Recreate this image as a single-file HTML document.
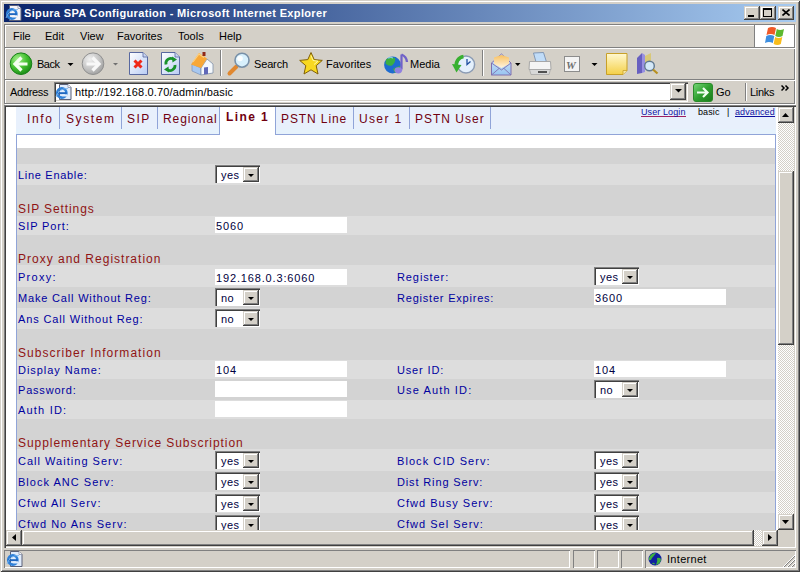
<!DOCTYPE html>
<html><head><meta charset="utf-8">
<style>
*{margin:0;padding:0;box-sizing:border-box}
html,body{width:800px;height:572px;overflow:hidden;background:#D4D0C8;font-family:"Liberation Sans",sans-serif;font-size:11px;color:#000}
.a{position:absolute}
.t{position:absolute;white-space:nowrap;line-height:1}
.raised{box-shadow: inset -1px -1px 0 #404040, inset 1px 1px 0 #D4D0C8, inset -2px -2px 0 #808080, inset 2px 2px 0 #FFFFFF;background:#D4D0C8}
.sunk1{box-shadow: inset 1px 1px 0 #808080, inset -1px -1px 0 #FFFFFF}

.tab{font-size:12px;color:#700010;letter-spacing:1px}
.tabact{font-size:12px;color:#700010;font-weight:bold;letter-spacing:1.4px}
.lnk{font-size:9px;letter-spacing:0.1px;line-height:8px;padding-bottom:0px}
.lbl{font-size:11px;color:#0000A0;letter-spacing:0.7px}
.hdr{font-size:12px;color:#901414;letter-spacing:0.9px}
.inp{width:132px;height:16px;background:#fff}
.inp span{position:absolute;left:1px;top:4px;font-size:11px;line-height:11px;color:#000040;letter-spacing:0.85px;white-space:nowrap}
.sel{width:45px;height:18px;background:#fff;box-shadow: inset 1px 1px 0 #808080, inset 2px 2px 0 #404040, inset -1px -1px 0 #FFFFFF}
.sel span{position:absolute;left:6px;top:5px;font-size:11px;line-height:11px;color:#000040;letter-spacing:0.4px;white-space:nowrap}
.sel i{position:absolute;left:28px;top:2px;width:16px;height:15px;background:#D4D0C8;box-shadow: inset -1px -1px 0 #404040, inset 1px 1px 0 #D4D0C8, inset -2px -2px 0 #808080, inset 2px 2px 0 #FFFFFF}
.sel i:after{content:"";position:absolute;left:5px;top:7px;border-left:3px solid transparent;border-right:3px solid transparent;border-top:3px solid #000}
</style></head><body>
<!-- window frame -->
<div class="a" style="left:0;top:0;width:800px;height:572px;background:#D4D0C8;box-shadow: inset 1px 1px 0 #D4D0C8, inset -1px -1px 0 #404040, inset 2px 2px 0 #FFFFFF, inset -2px -2px 0 #808080;"></div>

<!-- title bar -->
<div class="a" style="left:4px;top:4px;width:792px;height:18px;background:linear-gradient(to right,#0A246A,#A6CAF0)"></div>
<svg class="a" style="left:5px;top:5px" width="17" height="17" viewBox="0 0 17 17">
 <path d="M4.5 0.5H13L16 3.5V15.5H4.5z" fill="#F4F4F8" stroke="#5A6078" stroke-width="1"/>
 <path d="M13 0.5V3.5H16" fill="#fff" stroke="#8890A8" stroke-width="0.8"/>
 <circle cx="6.8" cy="9" r="4.6" fill="none" stroke="#2F80D8" stroke-width="2.6"/>
 <rect x="2.2" y="8.2" width="9.5" height="1.9" fill="#1F66C0"/>
 <rect x="7.2" y="10.3" width="5" height="2.2" fill="#F4F4F8"/>
 <path d="M1 13Q4 4 13 4.5" stroke="#7AB8F0" stroke-width="0.9" fill="none"/>
</svg>
<div class="t" style="left:24px;top:8px;color:#fff;font-weight:bold;font-size:11px;letter-spacing:0.35px">Sipura SPA Configuration - Microsoft Internet Explorer</div>
<div class="a raised" style="left:744px;top:6px;width:16px;height:14px"><div class="a" style="left:4px;top:9px;width:6px;height:2px;background:#000"></div></div>
<div class="a raised" style="left:760px;top:6px;width:16px;height:14px"><div class="a" style="left:3px;top:2px;width:9px;height:9px;border:1px solid #000;border-top-width:2px"></div></div>
<div class="a raised" style="left:778px;top:6px;width:16px;height:14px">
 <svg class="a" style="left:4px;top:3px" width="8" height="7" viewBox="0 0 8 7"><path d="M0.5 0.5L7.5 6.5M7.5 0.5L0.5 6.5" stroke="#000" stroke-width="1.6"/></svg>
</div>

<!-- menu bar -->
<div class="a" style="left:4px;top:24px;width:791px;height:80px;border:1px solid #808080;border-right:0;border-bottom:0"></div>
<div class="a" style="left:5px;top:25px;width:791px;height:80px;border-left:1px solid #fff;border-top:1px solid #fff;border-right:1px solid #fff;border-bottom:1px solid #fff"></div>
<div class="a" style="left:794px;top:24px;width:1px;height:80px;background:#808080"></div>
<div class="a" style="left:4px;top:103px;width:791px;height:1px;background:#808080"></div>
<div class="a" style="left:4px;top:47px;width:791px;height:1px;background:#808080"></div>
<div class="a" style="left:5px;top:48px;width:790px;height:1px;background:#fff"></div>
<div class="a" style="left:4px;top:79px;width:791px;height:1px;background:#808080"></div>
<div class="a" style="left:5px;top:80px;width:790px;height:1px;background:#fff"></div>
<div class="t" style="left:13px;top:31px">File</div>
<div class="t" style="left:45px;top:31px">Edit</div>
<div class="t" style="left:80px;top:31px">View</div>
<div class="t" style="left:117px;top:31px">Favorites</div>
<div class="t" style="left:178px;top:31px">Tools</div>
<div class="t" style="left:219px;top:31px">Help</div>
<div class="a" style="left:754px;top:25px;width:1px;height:22px;background:#808080"></div><div class="a" style="left:755px;top:25px;width:39px;height:22px;background:#fff"></div>
<svg class="a" style="left:763px;top:26px" width="24" height="20" viewBox="0 0 24 20">
 <path d="M5 2 Q9 0 13 2 L11.5 9 Q8 7 3.5 9z" fill="#F05A28"/>
 <path d="M13.8 3 Q17 5 21 3 L19.5 10 Q16 12 12.3 10z" fill="#5CB82E"/>
 <path d="M3.3 10 Q7 8 11.3 10 L9.8 17 Q6 15 2 17z" fill="#3C8EE0"/>
 <path d="M12.1 11 Q15.5 13 19.3 11 L17.8 18 Q14.5 20 10.6 18z" fill="#F8BC1C"/>
</svg>

<!-- toolbar -->
<svg class="a" style="left:0;top:48px" width="700" height="32" viewBox="0 48 700 32">
 <defs>
  <radialGradient id="gb" cx="35%" cy="30%" r="75%"><stop offset="0" stop-color="#A8F090"/><stop offset="0.55" stop-color="#44C030"/><stop offset="1" stop-color="#1A8A18"/></radialGradient>
  <radialGradient id="gg" cx="35%" cy="30%" r="75%"><stop offset="0" stop-color="#F0F0F0"/><stop offset="0.6" stop-color="#C4C4C4"/><stop offset="1" stop-color="#A0A0A0"/></radialGradient>
  <linearGradient id="pg" x1="0" y1="0" x2="1" y2="1"><stop offset="0" stop-color="#FFFFFF"/><stop offset="1" stop-color="#B8CCF4"/></linearGradient>
  <linearGradient id="yg" x1="0" y1="0" x2="0" y2="1"><stop offset="0" stop-color="#FFF8D0"/><stop offset="1" stop-color="#F4D048"/></linearGradient>
  <linearGradient id="eg" x1="0" y1="0" x2="0" y2="1"><stop offset="0" stop-color="#D8ECFC"/><stop offset="1" stop-color="#98C4F0"/></linearGradient>
  <linearGradient id="lg" x1="0" y1="0" x2="0" y2="1"><stop offset="0" stop-color="#F8C060"/><stop offset="1" stop-color="#FFF4E0"/></linearGradient>
 </defs>
 <!-- back -->
 <circle cx="21" cy="63.7" r="10.8" fill="url(#gb)" stroke="#168016" stroke-width="1"/>
 <path d="M21.5 57.5L15 64L21.5 70.5" stroke="#F4FFF0" stroke-width="3.2" fill="none" stroke-linejoin="miter"/>
 <path d="M16 64H27.5" stroke="#F4FFF0" stroke-width="3"/>
 <path d="M67.5 63H73.5L70.5 66z" fill="#000"/>
 <!-- forward -->
 <circle cx="93" cy="63.7" r="10.8" fill="url(#gg)" stroke="#909090" stroke-width="1"/>
 <path d="M92.5 57.5L99 64L92.5 70.5" stroke="#F8F8F8" stroke-width="3.2" fill="none"/>
 <path d="M86.5 64H98" stroke="#F8F8F8" stroke-width="3"/>
 <path d="M113 63H118L115.5 65.5z" fill="#707070"/>
 <!-- stop -->
 <path d="M129.5 52.5H143L147.5 57V74.5H129.5z" fill="url(#pg)" stroke="#5868A0" stroke-width="1"/>
 <path d="M143 52.5V57H147.5" fill="#C8D4F0" stroke="#5868A0" stroke-width="0.8"/>
 <path d="M134.5 60.5L141.5 67.5M141.5 60.5L134.5 67.5" stroke="#F02818" stroke-width="3"/>
 <!-- refresh -->
 <path d="M161.5 52.5H175L179.5 57V74.5H161.5z" fill="url(#pg)" stroke="#5868A0" stroke-width="1"/>
 <path d="M175 52.5V57H179.5" fill="#C8D4F0" stroke="#5868A0" stroke-width="0.8"/>
 <path d="M166 64.5A5 5 0 0 1 174 59.5" stroke="#18922A" stroke-width="2.8" fill="none"/><path d="M172 56.5L177 59.5L172.5 62.5z" fill="#18922A"/>
 <path d="M175 65A5 5 0 0 1 167 69.5" stroke="#18922A" stroke-width="2.8" fill="none"/><path d="M169 72.5L164 69.5L168.5 66.5z" fill="#18922A"/>
 <!-- home -->
 <path d="M192 64L201 68V75L192 71z" fill="#A8C8F0" stroke="#7088B0" stroke-width="0.6"/>
 <path d="M201 68L207 59L213 64V73L201 75z" fill="#F4F8FC" stroke="#8090A8" stroke-width="0.8"/>
 <path d="M204 67.5L208 67V74L204 74.5z" fill="#6068B8"/>
 <path d="M191 64.5L199 53L207 58.5L201 68z" fill="#F8A838"/>
 <path d="M193 62L199 54L204 57.5" stroke="#FCD080" stroke-width="1.2" fill="none"/>
 <rect x="202.5" y="52" width="3" height="4" fill="#902818"/>
 <!-- sep -->
 <rect x="220" y="50" width="1" height="26" fill="#808080"/><rect x="221" y="50" width="1" height="26" fill="#fff"/>
 <!-- search -->
 <path d="M229.5 73.5L236.5 66.5" stroke="#E08830" stroke-width="4" stroke-linecap="round"/>
 <circle cx="242" cy="60.2" r="7" fill="#D8F0FC" stroke="#7890A8" stroke-width="1.6"/>
 <circle cx="240" cy="58.5" r="2.8" fill="#FFFFFF" opacity="0.9"/>
 <!-- favorites -->
 <path d="M311 52.5L314.2 59.6L322.3 60.4L316.2 65.7L318 74L311 69.8L304 74L305.8 65.7L299.7 60.4L307.8 59.6z" fill="#F8D820" stroke="#806008" stroke-width="1"/>
 <path d="M311 55.5L313 60.5L318 61.2L314 64.5" stroke="#FFF8A0" stroke-width="1" fill="none"/>
 <!-- media -->
 <circle cx="392.5" cy="65" r="8.4" fill="#1E6CD0"/>
 <path d="M386 59.5Q390 56.5 395 58Q396 62 392 65.5Q388 66.5 385.5 63.5z M393 69Q397 66.5 400.5 66Q400 71 395 73z" fill="#3CB040"/>
 <path d="M388 58Q391 57 393 58" stroke="#9ED8F8" stroke-width="1" fill="none"/>
 <path d="M401.5 54.5V69.5" stroke="#7062C8" stroke-width="2.2"/>
 <path d="M401.5 54.5Q406.5 56.5 407 62" stroke="#7062C8" stroke-width="2.4" fill="none"/>
 <ellipse cx="398.3" cy="70.3" rx="3.8" ry="3.1" fill="#9080E0"/>
 <!-- history -->
 <circle cx="466" cy="64.5" r="8.6" fill="#E4F0FC" stroke="#8C9CB4" stroke-width="1.5"/>
 <path d="M467 59V64.5L470.5 61.5" stroke="#2050A0" stroke-width="1.3" fill="none"/>
 <path d="M456.5 67A8.5 8.5 0 0 1 463.5 56.5" stroke="#38B030" stroke-width="3.6" fill="none"/>
 <path d="M452 64L456.5 72.5L461.5 65z" fill="#38B030"/>
 <!-- sep -->
 <rect x="482" y="50" width="1" height="26" fill="#808080"/><rect x="483" y="50" width="1" height="26" fill="#fff"/>
 <!-- mail -->
 <path d="M491.5 63L501.5 54L511 63V75H491.5z" fill="url(#eg)" stroke="#8070B0" stroke-width="1"/>
 <path d="M494 64V57.5L501.5 55L509 57.5V64L501.5 68z" fill="url(#lg)"/>
 <path d="M491.5 63L501.5 70L511 63M491.5 75L499 68.5M511 75L504 68.5" stroke="#8070B0" stroke-width="0.9" fill="none"/>
 <path d="M515 63H520.5L517.75 66z" fill="#000"/>
 <!-- print -->
 <path d="M533.5 53L543.5 52.5L546.5 62H536z" fill="#C0DCF8" stroke="#7890B0" stroke-width="0.9"/>
 <path d="M529.5 61.5H550.5L551 69.5H529z" fill="#F4F4F4" stroke="#A0A0A0" stroke-width="0.9"/>
 <path d="M529.5 69.5H550.5L549 74.5H531z" fill="#D8D8D8" stroke="#A0A0A0" stroke-width="0.7"/>
 <rect x="538" y="71" width="9" height="2" fill="#505050"/>
 <!-- edit -->
 <rect x="564.5" y="56.5" width="15" height="15" fill="#F4F4F4" stroke="#8C8C8C" stroke-width="1"/>
 <text x="566" y="68.5" font-family="Liberation Serif" font-style="italic" font-weight="bold" font-size="11" fill="#707070">W</text>
 <path d="M591.5 63H597.5L594.5 66z" fill="#000"/>
 <!-- discuss -->
 <path d="M606.5 53.5H627V70.5L623 74.5H606.5z" fill="url(#yg)" stroke="#C8A028" stroke-width="1"/>
 <path d="M623 74.5V70.5H627" fill="#F8E8A0" stroke="#C8A028" stroke-width="0.8"/>
 <!-- research -->
 <path d="M637 58L642 53V73L637 74z" fill="#6860C0"/>
 <path d="M642 53L645 55V72L642 73z" fill="#9890E0"/>
 <path d="M645 56L651 53V61L645 64z" fill="#D8C878"/>
 <circle cx="649.5" cy="66" r="4.8" fill="#D4E8F8" stroke="#607890" stroke-width="1.4"/>
 <path d="M653 69.5L657.5 73.5" stroke="#B89020" stroke-width="2.2"/>
</svg>
<div class="t" style="left:37px;top:59px;letter-spacing:-0.5px">Back</div>
<div class="t" style="left:254px;top:59px;letter-spacing:-0.15px">Search</div>
<div class="t" style="left:326px;top:59px">Favorites</div>
<div class="t" style="left:410px;top:59px">Media</div>

<!-- address bar -->
<div class="t" style="left:10px;top:87px;letter-spacing:-0.3px">Address</div>
<div class="a" style="left:54px;top:82px;width:634px;height:20px;background:#fff;box-shadow: inset 1px 1px 0 #808080, inset 2px 2px 0 #404040, inset -1px -1px 0 #FFFFFF, inset -2px -2px 0 #D4D0C8"></div>
<svg class="a" style="left:55px;top:84px" width="17" height="17" viewBox="0 0 17 17">
 <path d="M4.5 0.5H13L16 3.5V15.5H4.5z" fill="#E0ECFC" stroke="#5A6078" stroke-width="1"/>
 <path d="M13 0.5V3.5H16" fill="#fff" stroke="#8890A8" stroke-width="0.8"/>
 <circle cx="6.8" cy="9" r="4.6" fill="none" stroke="#2F80D8" stroke-width="2.6"/>
 <rect x="2.2" y="8.2" width="9.5" height="1.9" fill="#1F66C0"/>
 <rect x="7.2" y="10.3" width="5" height="2.2" fill="#E0ECFC"/>
 <path d="M1 13Q4 4 13 4.5" stroke="#7AB8F0" stroke-width="0.9" fill="none"/>
</svg>
<div class="t" style="left:75px;top:87px;letter-spacing:0.15px">http://192.168.0.70/admin/basic</div>
<div class="a raised" style="left:670px;top:83px;width:16px;height:17px"><svg class="a" style="left:5px;top:6px" width="7" height="4"><path d="M0 0H7L3.5 3.5z" fill="#000"/></svg></div>
<svg class="a" style="left:693px;top:83px" width="20" height="19" viewBox="0 0 20 19">
 <defs><linearGradient id="gog" x1="0" y1="0" x2="1" y2="1"><stop offset="0" stop-color="#78D878"/><stop offset="0.5" stop-color="#30A030"/><stop offset="1" stop-color="#1A7A1A"/></linearGradient></defs>
 <rect x="0.5" y="0.5" width="19" height="18" rx="2.5" fill="url(#gog)" stroke="#2A8A2A" stroke-width="1"/>
 <path d="M4 9.5H14.5M10 5L14.5 9.5L10 14" stroke="#F0FFF0" stroke-width="2.2" fill="none"/>
</svg>
<div class="t" style="left:716px;top:87px">Go</div>
<div class="a" style="left:745px;top:83px;width:2px;height:18px;border-left:1px solid #808080;border-right:1px solid #fff"></div>
<div class="t" style="left:750px;top:87px;letter-spacing:-0.3px">Links</div>
<svg class="a" style="left:781px;top:85px" width="9" height="7" viewBox="0 0 9 7"><path d="M0.5 0.5L3 3L0.5 5.5M4.5 0.5L7 3L4.5 5.5" stroke="#000" stroke-width="1.5" fill="none"/></svg>

<!-- content border -->
<div class="a" style="left:4px;top:105px;width:792px;height:443px;box-shadow: inset 1px 1px 0 #808080, inset 2px 2px 0 #404040, inset -1px -1px 0 #FFFFFF, inset -2px -2px 0 #D4D0C8;background:#fff"></div>
<div class="a" style="left:16px;top:107px;width:760px;height:27px;background:#E8F0FC"></div>
<div class="a" style="left:16px;top:129px;width:760px;height:5px;background:#E6F2FC"></div>
<div class="a" style="left:16px;top:134px;width:760px;height:1px;background:#90A4D8"></div>
<div class="a" style="left:16px;top:134px;width:1px;height:400px;background:#90A4D8"></div>
<div class="a" style="left:775px;top:134px;width:1px;height:400px;background:#90A4D8"></div>
<div class="t tab" style="left:27px;top:113px;letter-spacing:1.60px">Info</div>
<div class="a" style="left:59px;top:107px;width:1px;height:22px;background:#90A4D8"></div>
<div class="t tab" style="left:66px;top:113px;letter-spacing:1.60px">System</div>
<div class="a" style="left:121px;top:107px;width:1px;height:22px;background:#90A4D8"></div>
<div class="t tab" style="left:127px;top:113px;letter-spacing:1.50px">SIP</div>
<div class="a" style="left:157px;top:107px;width:1px;height:22px;background:#90A4D8"></div>
<div class="t tab" style="left:163px;top:113px;letter-spacing:0.90px">Regional</div>
<div class="a" style="left:220px;top:107px;width:1px;height:22px;background:#90A4D8"></div>
<div class="a" style="left:219px;top:107px;width:57px;height:28px;background:#fff;border-left:1px solid #90A4D8;border-right:1px solid #90A4D8"></div>
<div class="t tabact" style="left:226px;top:111px">Line 1</div>
<div class="t tab" style="left:281px;top:113px;letter-spacing:0.90px">PSTN Line</div>
<div class="a" style="left:353px;top:107px;width:1px;height:22px;background:#90A4D8"></div>
<div class="t tab" style="left:359px;top:113px;letter-spacing:1.35px">User 1</div>
<div class="a" style="left:409px;top:107px;width:1px;height:22px;background:#90A4D8"></div>
<div class="t tab" style="left:415px;top:113px;letter-spacing:1.00px">PSTN User</div>
<div class="a" style="left:490px;top:107px;width:1px;height:22px;background:#90A4D8"></div>
<div class="t lnk" style="left:641px;top:108px;color:#1010A0;border-bottom:1px solid #A02060">User Login</div>
<div class="t lnk" style="left:698px;top:108px;color:#000">basic</div>
<div class="t lnk" style="left:727px;top:108px;color:#000">|</div>
<div class="t lnk" style="left:735px;top:108px;color:#1010A0;border-bottom:1px solid #1010A0">advanced</div>
<div class="a" style="left:17px;top:148px;width:758px;height:16px;background:#D3D3D3"></div>
<div class="a" style="left:17px;top:164px;width:758px;height:21px;background:#DDDDDD"></div>
<div class="a" style="left:17px;top:185px;width:758px;height:31px;background:#D3D3D3"></div>
<div class="a" style="left:17px;top:216px;width:758px;height:19px;background:#DDDDDD"></div>
<div class="a" style="left:17px;top:235px;width:758px;height:30px;background:#D3D3D3"></div>
<div class="a" style="left:17px;top:265px;width:758px;height:22px;background:#DDDDDD"></div>
<div class="a" style="left:17px;top:287px;width:758px;height:21px;background:#D3D3D3"></div>
<div class="a" style="left:17px;top:308px;width:758px;height:21px;background:#DDDDDD"></div>
<div class="a" style="left:17px;top:329px;width:758px;height:31px;background:#D3D3D3"></div>
<div class="a" style="left:17px;top:360px;width:758px;height:19px;background:#DDDDDD"></div>
<div class="a" style="left:17px;top:379px;width:758px;height:21px;background:#D3D3D3"></div>
<div class="a" style="left:17px;top:400px;width:758px;height:19px;background:#DDDDDD"></div>
<div class="a" style="left:17px;top:419px;width:758px;height:30px;background:#D3D3D3"></div>
<div class="a" style="left:17px;top:449px;width:758px;height:22px;background:#DDDDDD"></div>
<div class="a" style="left:17px;top:471px;width:758px;height:21px;background:#D3D3D3"></div>
<div class="a" style="left:17px;top:492px;width:758px;height:21px;background:#DDDDDD"></div>
<div class="a" style="left:17px;top:513px;width:758px;height:22px;background:#D3D3D3"></div>
<div class="t lbl" style="left:18px;top:170px;letter-spacing:0.70px">Line Enable:</div>
<div class="a sel" style="left:215px;top:165px"><span>yes</span><i></i></div>
<div class="t hdr" style="left:18px;top:203px;letter-spacing:0.90px">SIP Settings</div>
<div class="t lbl" style="left:18px;top:221px;letter-spacing:0.87px">SIP Port:</div>
<div class="a inp" style="left:215px;top:217px"><span>5060</span></div>
<div class="t hdr" style="left:18px;top:253px;letter-spacing:1.00px">Proxy and Registration</div>
<div class="t lbl" style="left:18px;top:272px;letter-spacing:1.28px">Proxy:</div>
<div class="a inp" style="left:215px;top:269px"><span>192.168.0.3:6060</span></div>
<div class="t lbl" style="left:397px;top:272px;letter-spacing:0.90px">Register:</div>
<div class="a sel" style="left:594px;top:267px"><span>yes</span><i></i></div>
<div class="t lbl" style="left:18px;top:293px;letter-spacing:0.82px">Make Call Without Reg:</div>
<div class="a sel" style="left:215px;top:288px"><span>no</span><i></i></div>
<div class="t lbl" style="left:397px;top:293px;letter-spacing:0.79px">Register Expires:</div>
<div class="a inp" style="left:594px;top:289px"><span>3600</span></div>
<div class="t lbl" style="left:18px;top:314px;letter-spacing:0.85px">Ans Call Without Reg:</div>
<div class="a sel" style="left:215px;top:309px"><span>no</span><i></i></div>
<div class="t hdr" style="left:18px;top:347px;letter-spacing:1.04px">Subscriber Information</div>
<div class="t lbl" style="left:18px;top:365px;letter-spacing:0.95px">Display Name:</div>
<div class="a inp" style="left:215px;top:361px"><span>104</span></div>
<div class="t lbl" style="left:397px;top:365px;letter-spacing:0.84px">User ID:</div>
<div class="a inp" style="left:594px;top:361px"><span>104</span></div>
<div class="t lbl" style="left:18px;top:385px;letter-spacing:0.80px">Password:</div>
<div class="a inp" style="left:215px;top:381px"><span></span></div>
<div class="t lbl" style="left:397px;top:385px;letter-spacing:1.13px">Use Auth ID:</div>
<div class="a sel" style="left:594px;top:380px"><span>no</span><i></i></div>
<div class="t lbl" style="left:18px;top:405px;letter-spacing:1.19px">Auth ID:</div>
<div class="a inp" style="left:215px;top:401px"><span></span></div>
<div class="t hdr" style="left:18px;top:437px;letter-spacing:0.95px">Supplementary Service Subscription</div>
<div class="t lbl" style="left:18px;top:456px;letter-spacing:1.02px">Call Waiting Serv:</div>
<div class="a sel" style="left:215px;top:451px"><span>yes</span><i></i></div>
<div class="t lbl" style="left:397px;top:456px;letter-spacing:1.07px">Block CID Serv:</div>
<div class="a sel" style="left:594px;top:451px"><span>yes</span><i></i></div>
<div class="t lbl" style="left:18px;top:477px;letter-spacing:1.02px">Block ANC Serv:</div>
<div class="a sel" style="left:215px;top:472px"><span>yes</span><i></i></div>
<div class="t lbl" style="left:397px;top:477px;letter-spacing:0.86px">Dist Ring Serv:</div>
<div class="a sel" style="left:594px;top:472px"><span>yes</span><i></i></div>
<div class="t lbl" style="left:18px;top:498px;letter-spacing:1.08px">Cfwd All Serv:</div>
<div class="a sel" style="left:215px;top:494px"><span>yes</span><i></i></div>
<div class="t lbl" style="left:397px;top:498px;letter-spacing:1.02px">Cfwd Busy Serv:</div>
<div class="a sel" style="left:594px;top:494px"><span>yes</span><i></i></div>
<div class="t lbl" style="left:18px;top:519px;letter-spacing:1.01px">Cfwd No Ans Serv:</div>
<div class="a sel" style="left:215px;top:515px"><span>yes</span><i></i></div>
<div class="t lbl" style="left:397px;top:519px;letter-spacing:1.01px">Cfwd Sel Serv:</div>
<div class="a sel" style="left:594px;top:515px"><span>yes</span><i></i></div>

<!-- vertical scrollbar -->
<div class="a" style="left:778px;top:107px;width:16px;height:423px;background:repeating-conic-gradient(#D4D0C8 0 25%, #fff 0 50%) 0 0/2px 2px"></div>
<div class="a raised" style="left:778px;top:107px;width:16px;height:16px"><svg class="a" style="left:4px;top:6px" width="7" height="4"><path d="M0 4H7L3.5 0z" fill="#000"/></svg></div>
<div class="a raised" style="left:778px;top:171px;width:16px;height:174px"></div>
<div class="a raised" style="left:778px;top:514px;width:16px;height:16px"><svg class="a" style="left:4px;top:6px" width="7" height="4"><path d="M0 0H7L3.5 4z" fill="#000"/></svg></div>
<!-- horizontal scrollbar -->
<div class="a" style="left:6px;top:530px;width:772px;height:16px;background:repeating-conic-gradient(#D4D0C8 0 25%, #fff 0 50%) 0 0/2px 2px"></div>
<div class="a raised" style="left:6px;top:530px;width:16px;height:16px"><svg class="a" style="left:6px;top:4px" width="4" height="7"><path d="M4 0V7L0 3.5z" fill="#000"/></svg></div>
<div class="a raised" style="left:22px;top:530px;width:732px;height:16px"></div>
<div class="a raised" style="left:762px;top:530px;width:16px;height:16px"><svg class="a" style="left:6px;top:4px" width="4" height="7"><path d="M0 0V7L4 3.5z" fill="#000"/></svg></div>
<div class="a" style="left:778px;top:530px;width:16px;height:16px;background:#D4D0C8"></div>

<!-- status bar -->
<div class="a sunk1" style="left:4px;top:550px;width:566px;height:18px"></div>
<svg class="a" style="left:6px;top:551px" width="17" height="17" viewBox="0 0 17 17">
 <path d="M4.5 0.5H13L16 3.5V15.5H4.5z" fill="#E0ECFC" stroke="#5A6078" stroke-width="1"/>
 <path d="M13 0.5V3.5H16" fill="#fff" stroke="#8890A8" stroke-width="0.8"/>
 <circle cx="6.8" cy="9" r="4.6" fill="none" stroke="#2F80D8" stroke-width="2.6"/>
 <rect x="2.2" y="8.2" width="9.5" height="1.9" fill="#1F66C0"/>
 <rect x="7.2" y="10.3" width="5" height="2.2" fill="#E0ECFC"/>
 <path d="M1 13Q4 4 13 4.5" stroke="#7AB8F0" stroke-width="0.9" fill="none"/>
</svg>
<div class="a sunk1" style="left:573px;top:550px;width:22px;height:18px"></div>
<div class="a sunk1" style="left:597px;top:550px;width:22px;height:18px"></div>
<div class="a sunk1" style="left:621px;top:550px;width:22px;height:18px"></div>
<div class="a sunk1" style="left:645px;top:550px;width:151px;height:18px"></div>
<svg class="a" style="left:648px;top:552px" width="14" height="14" viewBox="0 0 14 14">
 <circle cx="7" cy="7" r="6.5" fill="#1020A0"/>
 <path d="M1 6Q3 1 8 1Q6 4 4 6Q3 9 1 8z M9 6Q13 5 13 8Q12 12 8 13Q10 9 9 6z M4 11Q6 10 7 12Q5 13 4 11z" fill="#40B040"/>
</svg>
<div class="t" style="left:667px;top:554px;letter-spacing:0.3px">Internet</div>
<svg class="a" style="left:782px;top:554px" width="14" height="14" viewBox="0 0 14 14">
 <path d="M13 1L1 13M13 5L5 13M13 9L9 13" stroke="#fff" stroke-width="1"/>
 <path d="M13 2L2 13M13 6L6 13M13 10L10 13" stroke="#808080" stroke-width="1"/>
</svg>
</body></html>
